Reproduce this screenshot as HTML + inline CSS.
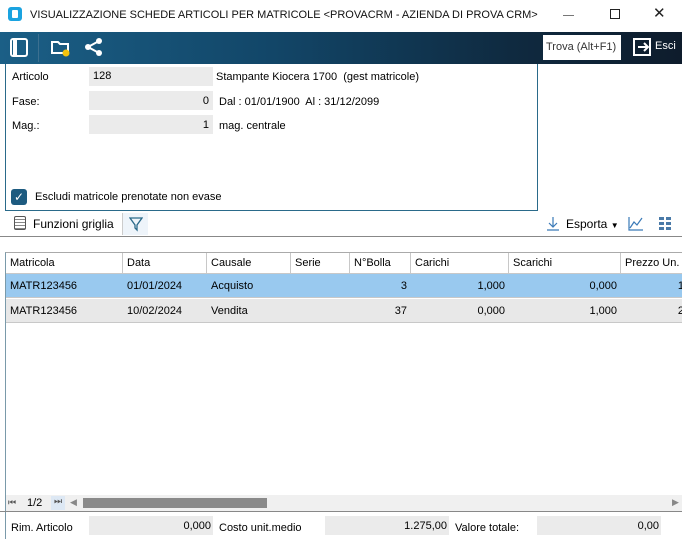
<!DOCTYPE html><html><head><style>
*{box-sizing:border-box;margin:0;padding:0}
body{width:682px;height:539px;overflow:hidden;background:#fff;font-family:"Liberation Sans",sans-serif;font-size:11px;color:#000;position:relative}
.a{position:absolute;white-space:nowrap}
.fld{position:absolute;background:#ebebeb;height:19px}
.gc{position:absolute;top:0;height:100%;padding:6px 4px;font-size:11px}
.hd .gc{border-right:1px solid #c8c8c8;padding-top:4px}
.row{position:absolute;left:6px;width:676px;height:24px}
.r{text-align:right}
</style></head><body>
<!-- title bar -->
<div class="a" style="left:8px;top:7px;width:14px;height:14px;background:#1aa3e0;border-radius:3px"><div style="position:absolute;left:4px;top:3px;width:6px;height:8px;background:#fff;border-radius:1px"></div></div>
<div class="a" style="left:30px;top:9px;font-size:11px;color:#111">VISUALIZZAZIONE SCHEDE ARTICOLI PER MATRICOLE &lt;PROVACRM - AZIENDA DI PROVA CRM&gt;</div>
<div class="a" style="left:563px;top:15px;width:11px;height:1px;background:#777"></div>
<div class="a" style="left:610px;top:9px;width:10px;height:10px;border:1px solid #222"></div>
<div class="a" style="left:653px;top:4px;font-size:15px;color:#222">✕</div>
<!-- toolbar -->
<div class="a" style="left:0;top:32px;width:682px;height:32px;background:linear-gradient(90deg,#1b5f86 0%,#124668 40%,#0f2a40 75%,#0e1c2c 100%)"></div>
<div class="a" style="left:10px;top:38px;width:18px;height:19px;border:2px solid #fff;border-radius:3px"><div style="position:absolute;left:1px;top:0;width:4px;height:15px;background:#fff"></div></div>
<div class="a" style="left:38px;top:34px;width:1px;height:28px;background:#3c7090"></div>
<svg class="a" style="left:50px;top:38px" width="22" height="20"><path d="M2 4h6l2 2h8v9H2z" fill="none" stroke="#fff" stroke-width="2"/><circle cx="16" cy="15" r="3.5" fill="#f4c20d"/></svg>
<svg class="a" style="left:83px;top:37px" width="22" height="20"><circle cx="16" cy="4" r="3" fill="#fff"/><circle cx="5" cy="10" r="3" fill="#fff"/><circle cx="16" cy="16" r="3" fill="#fff"/><path d="M16 4L5 10L16 16" stroke="#fff" stroke-width="2" fill="none"/></svg>
<div class="a" style="left:543px;top:35px;width:78px;height:25px;background:#fff;color:#333;font-size:11px;padding:6px 3px">Trova (Alt+F1)</div>
<svg class="a" style="left:631px;top:36px" width="22" height="22"><path d="M9 3H3v16h6" fill="none" stroke="#fff" stroke-width="2"/><path d="M3 3h16v16H3" fill="none" stroke="#fff" stroke-width="2"/><path d="M7 11h10M13 7l4 4-4 4" fill="none" stroke="#fff" stroke-width="2"/></svg>
<div class="a" style="left:655px;top:40px;color:#fff;font-size:11px">Esci</div>
<!-- panel -->
<div class="a" style="left:5px;top:64px;width:533px;height:147px;border:1px solid #2a6a8a;border-top:none"></div>
<div class="a" style="left:12px;top:71px">Articolo</div>
<div class="fld" style="left:89px;top:67px;width:124px;padding:3px 4px">128</div>
<div class="a" style="left:216px;top:71px">Stampante Kiocera 1700&nbsp; (gest matricole)</div>
<div class="a" style="left:12px;top:96px">Fase:</div>
<div class="fld r" style="left:89px;top:91px;width:124px;padding:4px 4px">0</div>
<div class="a" style="left:219px;top:96px">Dal : 01/01/1900&nbsp; Al : 31/12/2099</div>
<div class="a" style="left:12px;top:120px">Mag.:</div>
<div class="fld r" style="left:89px;top:115px;width:124px;padding:4px 4px">1</div>
<div class="a" style="left:219px;top:120px">mag. centrale</div>
<div class="a" style="left:11px;top:189px;width:16px;height:16px;background:#1d5b80;border-radius:3px;color:#fff;font-size:12px;text-align:center;line-height:16px">✓</div>
<div class="a" style="left:35px;top:191px">Escludi matricole prenotate non evase</div>
<!-- grid toolbar -->
<div class="a" style="left:14px;top:216px;width:12px;height:14px;border:1px solid #555;border-radius:2px;background:repeating-linear-gradient(#fff 0 2px,#888 2px 3px)"></div>
<div class="a" style="left:33px;top:217px;font-size:12px">Funzioni griglia</div>
<div class="a" style="left:122px;top:213px;width:26px;height:22px;border-left:1px solid #ccc;background:#eef4fa"></div>
<svg class="a" style="left:129px;top:216px" width="14" height="16"><path d="M1 2h12L8 9v5L6 12V9z" fill="none" stroke="#2a6a8a" stroke-width="1.3"/></svg>
<svg class="a" style="left:546px;top:216px" width="14" height="16"><path d="M7 1v10M3 7l4 4 4-4M1 14h12" fill="none" stroke="#3a7ab8" stroke-width="1.2"/></svg>
<div class="a" style="left:566px;top:217px;font-size:12px">Esporta <span style="font-size:8px">▼</span></div>
<svg class="a" style="left:628px;top:216px" width="16" height="15"><path d="M1 1v13h14M2 12l4-6 3 3 5-7" fill="none" stroke="#3a7ab8" stroke-width="1.2"/></svg>
<svg class="a" style="left:659px;top:217px" width="13" height="13" fill="#4a7aa8"><rect x="0" y="0" width="5" height="3"/><rect x="7" y="0" width="5" height="3"/><rect x="0" y="5" width="5" height="3"/><rect x="7" y="5" width="5" height="3"/><rect x="0" y="10" width="5" height="3"/><rect x="7" y="10" width="5" height="3"/></svg>
<div class="a" style="left:0;top:236px;width:682px;height:1px;background:#888"></div>
<!-- grid -->
<div class="a" style="left:5px;top:252px;width:677px;height:287px;border-left:1px solid #7a9aaa;border-top:1px solid #aaa"></div>
<div class="row hd" style="top:253px;height:21px;border-bottom:1px solid #c8c8c8">
<div class="gc" style="left:0;width:117px">Matricola</div><div class="gc" style="left:117px;width:84px">Data</div><div class="gc" style="left:201px;width:84px">Causale</div><div class="gc" style="left:285px;width:59px">Serie</div><div class="gc" style="left:344px;width:61px">N°Bolla</div><div class="gc" style="left:405px;width:98px">Carichi</div><div class="gc" style="left:503px;width:112px">Scarichi</div><div class="gc" style="left:615px;width:70px">Prezzo Un.</div></div>
<div class="row" style="top:274px;background:#99c9ef;border-bottom:1px solid #c8c8c8">
<div class="gc" style="left:0;width:117px">MATR123456</div><div class="gc" style="left:117px;width:84px">01/01/2024</div><div class="gc" style="left:201px;width:84px">Acquisto</div><div class="gc r" style="left:344px;width:61px">3</div><div class="gc r" style="left:405px;width:98px">1,000</div><div class="gc r" style="left:503px;width:112px">0,000</div><div class="gc r" style="left:615px;width:70px">1.</div></div>
<div class="row" style="top:299px;background:#e8e8e8;border-bottom:1px solid #c8c8c8">
<div class="gc" style="left:0;width:117px">MATR123456</div><div class="gc" style="left:117px;width:84px">10/02/2024</div><div class="gc" style="left:201px;width:84px">Vendita</div><div class="gc r" style="left:344px;width:61px">37</div><div class="gc r" style="left:405px;width:98px">0,000</div><div class="gc r" style="left:503px;width:112px">1,000</div><div class="gc r" style="left:615px;width:70px">2.</div></div>
<!-- scrollbar -->
<div class="a" style="left:6px;top:495px;width:676px;height:16px;background:#f0f0f0"></div>
<div class="a" style="left:8px;top:497px;font-size:9px;color:#555">⏮</div>
<div class="a" style="left:27px;top:497px">1/2</div>
<div class="a" style="left:51px;top:496px;width:14px;height:14px;background:#dde8f4;font-size:9px;color:#555;text-align:center">⏭</div>
<div class="a" style="left:70px;top:497px;font-size:9px;color:#888">◀</div>
<div class="a" style="left:83px;top:498px;width:184px;height:10px;background:#8a8a8a"></div>
<div class="a" style="left:672px;top:497px;font-size:9px;color:#888">▶</div>
<div class="a" style="left:0;top:511px;width:682px;height:1px;background:#888"></div>
<!-- footer -->
<div class="a" style="left:11px;top:522px">Rim. Articolo</div>
<div class="fld r" style="left:89px;top:516px;width:124px;padding:4px 2px">0,000</div>
<div class="a" style="left:219px;top:522px">Costo unit.medio</div>
<div class="fld r" style="left:325px;top:516px;width:124px;padding:4px 2px">1.275,00</div>
<div class="a" style="left:455px;top:522px">Valore totale:</div>
<div class="fld r" style="left:537px;top:516px;width:124px;padding:4px 2px">0,00</div>
</body></html>
